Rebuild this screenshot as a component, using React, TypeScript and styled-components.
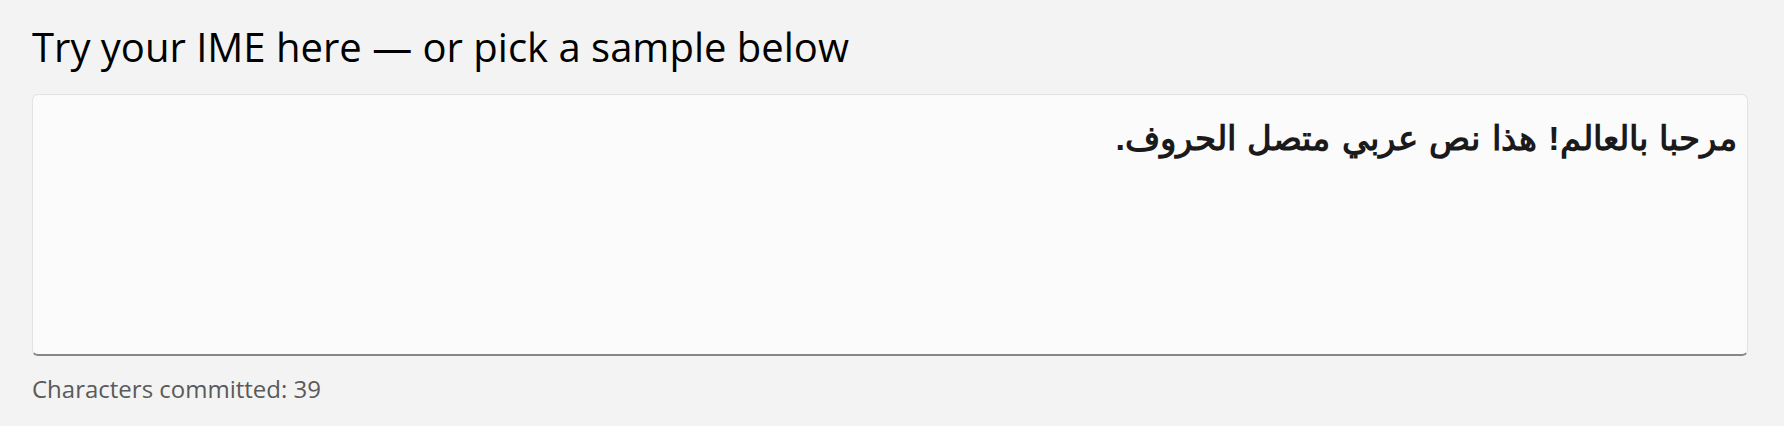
import * as React from 'react'
import styled, { createGlobalStyle } from 'styled-components'

const { useState } = React

const SAMPLE = 'مرحبا بالعالم! هذا نص عربي متصل الحروف.'

const GlobalStyle = createGlobalStyle`
  html, body {
    margin: 0;
    padding: 0;
    background: #f3f3f3;
  }
  body {
    font-family: "Open Sans", sans-serif;
    color: #000;
  }
`

const Page = styled.main`
  padding: 20px 36px 0 32px;
`

const Title = styled.h1`
  margin: 0 0 20px;
  font-size: 40px;
  font-weight: 400;
  line-height: 54px;
`

const Field = styled.textarea`
  display: block;
  box-sizing: border-box;
  width: 100%;
  height: 262px;
  margin: 0;
  padding: 18px 10px 12px;
  border: 1px solid #e2e2e2;
  border-bottom: 2px solid #868686;
  border-radius: 6px;
  background: #fbfbfb;
  color: #1a1a1a;
  font-family: sans-serif;
  font-size: 34px;
  font-weight: 600;
  line-height: 50px;
  word-spacing: 2px;
  resize: none;
  outline: none;
`

const Counter = styled.p`
  margin: 16px 0 0;
  font-size: 24px;
  line-height: 33px;
  color: #5a5a5a;
`

export default function App() {
  const [text, setText] = useState(SAMPLE)

  return (
    <>
      <GlobalStyle />
      <Page>
        <Title>Try your IME here — or pick a sample below</Title>
        <Field dir="rtl" value={text} onChange={(e) => setText(e.target.value)} />
        <Counter>Characters committed: {text.length}</Counter>
      </Page>
    </>
  )
}
